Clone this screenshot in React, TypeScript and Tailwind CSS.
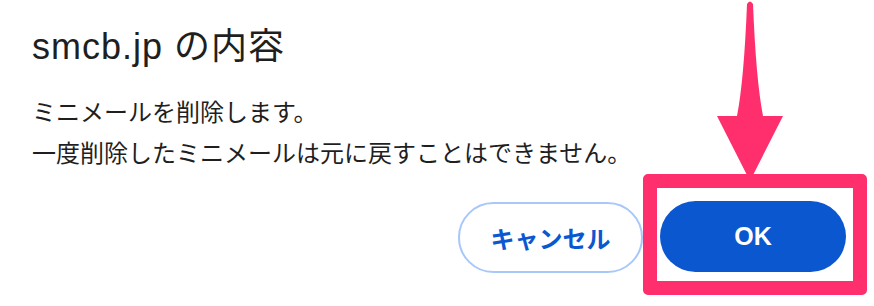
export default function App() {
  return (
    <div className="relative h-[306px] w-[874px] overflow-hidden bg-white text-[#1f1f1f] [font-family:'Liberation_Sans','Noto_Sans_CJK_JP',sans-serif]">
      <div className="pl-[32px] pt-[23px]">
        <h1 className="text-[36px] leading-[48px] tracking-[1px]">smcb.jp の内容</h1>
        <div className="mt-[19px] text-[24px] leading-[41px] [font-family:'Noto_Sans_CJK_JP',sans-serif]">
          <p>ミニメールを削除します。</p>
          <p>一度削除したミニメールは元に戻すことはできません。</p>
        </div>
      </div>

      <div className="absolute left-[458px] top-[174px] flex items-start">
        <button className="mt-[28px] flex h-[71px] w-[185px] items-center justify-center rounded-full border-2 border-[#a8c7fa] bg-white text-[24px] font-bold text-[#0b57d0] [font-family:'Noto_Sans_CJK_JP',sans-serif]">
          キャンセル
        </button>
        <div className="rounded-[5px] border-[14px] border-[#ff2e6c] pb-[9px] pl-[3px] pr-[7px] pt-[13px]">
          <button className="flex h-[71px] w-[186px] items-center justify-center rounded-full bg-[#0b57d0] text-[25px] font-bold text-white">
            OK
          </button>
        </div>
      </div>

      {/* annotation arrow */}
      <svg className="pointer-events-none absolute left-0 top-0" width="874" height="306" viewBox="0 0 874 306">
        <path
          d="M747 4 Q750 -1 753 4 Q756 80 763 116 L783 116 L750 181 L717 116 L737 116 Q744 80 747 4 Z"
          fill="#ff2e6c"
        />
      </svg>
    </div>
  );
}
